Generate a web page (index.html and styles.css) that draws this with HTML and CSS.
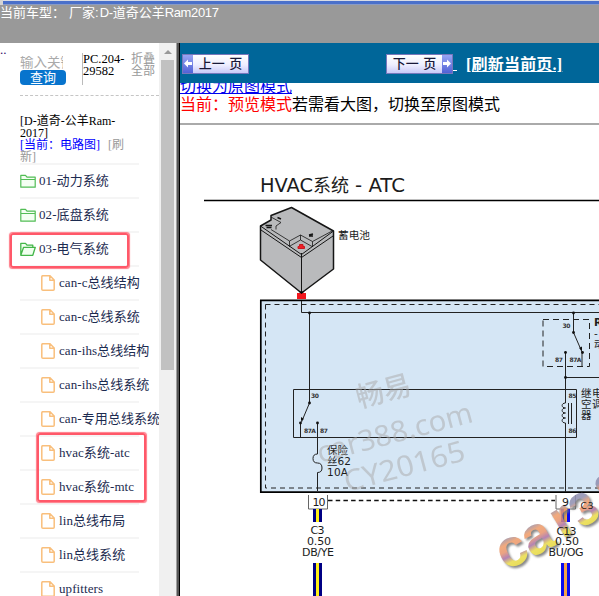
FILE: index.html
```
<!DOCTYPE html>
<html lang="zh-CN">
<head>
<meta charset="utf-8">
<title>HVAC系统 - ATC</title>
<link rel="stylesheet" href="styles.css">
</head>
<body>
<svg class="defs" width="0" height="0">
  <symbol id="folder" viewBox="0 0 16 15"><path d="M.8 13.2V1.3H5.5L7 3.2H15.2V13.2H.8ZM.8 5.5H15.2" fill="#f4fff3" stroke="#52bd55" stroke-width="1.2" stroke-linejoin="round"/></symbol>
  <symbol id="folder-open" viewBox="0 0 16 15"><path d="M.8 13V1.3H5.5L7 3.2H12.8V5.2M.8 13.3L3.6 5.3H15.3L12.8 13.3Z" fill="#f0ffef" stroke="#43b649" stroke-width="1.3" stroke-linejoin="round"/></symbol>
  <symbol id="file" viewBox="0 0 14 16"><path d="M2 .7H9L13.2 5V14.2Q13.2 15.2 12.2 15.2H2Q.8 15.2 .8 14.2V1.8Q.8 .7 2 .7ZM8.8 .9V5.2H13" fill="#fff" stroke="#f9bf7c" stroke-width="1.5" stroke-linejoin="round"/></symbol>
</svg>
<header class="top"><div class="top-line"></div><span>当前车型：</span><span class="maker">厂家:<b>D-</b>道奇公羊<b>Ram2017</b></span></header>
<div class="frames">
  <aside class="side">
    <span class="dots">..</span>
    <div class="nav">
      <div class="tools">
        <div class="search"><div class="input">输入关键</div><div class="button">查询</div></div>
        <div class="code">PC.204-<br>29582</div>
        <div class="fold">折叠<br>全部</div>
      </div>
      <div class="model">[D-道奇-公羊Ram-<br>2017]<br><span class="current">[当前：电路图]</span> <span class="reload">[刷<br>新]</span></div>
      <ul class="tree">
        <li><svg class="dir"><use href="#folder"/></svg>01-动力系统</li>
        <li><svg class="dir"><use href="#folder"/></svg>02-底盘系统</li>
        <li><svg class="dir"><use href="#folder-open"/></svg>03-电气系统</li>
        <li class="leaf"><svg><use href="#file"/></svg>can-c总线结构</li>
        <li class="leaf"><svg><use href="#file"/></svg>can-c总线系统</li>
        <li class="leaf"><svg><use href="#file"/></svg>can-ihs总线结构</li>
        <li class="leaf"><svg><use href="#file"/></svg>can-ihs总线系统</li>
        <li class="leaf"><svg><use href="#file"/></svg>can-专用总线系统</li>
        <li class="leaf"><svg><use href="#file"/></svg>hvac系统-atc</li>
        <li class="leaf"><svg><use href="#file"/></svg>hvac系统-mtc</li>
        <li class="leaf"><svg><use href="#file"/></svg>lin总线布局</li>
        <li class="leaf"><svg><use href="#file"/></svg>lin总线系统</li>
        <li class="leaf"><svg><use href="#file"/></svg>upfitters</li>
      </ul>
    </div>
    <div class="scrollbar"><div class="arrow"></div><div class="thumb"></div></div>
    <div class="mark mark-dir"></div>
    <div class="mark mark-leaf"></div>
  </aside>
  <div class="divider"></div>
  <main class="main">
    <div class="pager">
      <div class="page prev"><i><svg viewBox="0 0 10 16"><path d="M1 8L5 4V6.5H9V9.5H5V12Z" fill="#fff"/></svg></i><span>上一 页</span></div>
      <div class="page next"><span>下一 页</span><i><svg viewBox="0 0 10 16"><path d="M9 8L5 4V6.5H1V9.5H5V12Z" fill="#fff"/></svg></i></div>
      <span class="gap-line"></span>
      <a class="refresh">[刷新当前页.]</a>
    </div>
    <div class="mode"><a>切换为原图模式</a></div>
    <div class="hint"><span>当前：预览模式</span>若需看大图，切换至原图模式</div>
    <svg class="diagram" viewBox="180 125 419 471" width="419" height="471">
      <defs>
        <linearGradient id="logo" x1="0" y1="0" x2="0" y2="1">
          <stop offset=".3" stop-color="#8f8fb0"/><stop offset=".42" stop-color="#f09c68"/><stop offset=".52" stop-color="#e8956f"/><stop offset=".62" stop-color="#a870a8"/><stop offset=".72" stop-color="#eadc4a"/><stop offset=".85" stop-color="#e4d63c"/>
        </linearGradient>
      </defs>
      <text x="260" y="192" font-size="19" textLength="53" lengthAdjust="spacingAndGlyphs">HVAC</text>
      <text x="313" y="192" font-size="18" textLength="36">系统</text>
      <text x="355" y="192" font-size="19" textLength="50" lengthAdjust="spacingAndGlyphs">- ATC</text>
      <path d="M204 200.5H599" stroke="#000" stroke-width="1.4"/>

      <g stroke="#151515" stroke-linejoin="round">
        <path d="M260.5 226L271 220V215.5L291.500 207.500L333.500 231V269L301.500 293L260.500 260Z" fill="#b9babc" stroke-width="1.5"/>
        <path d="M260.500 226L301.500 254.500L333.500 231M261 230L301.500 257.500L333 236M301.500 253V293" fill="none" stroke-width="1"/>
        <path d="M271 217L281 222.500L276 226V229.500M271 229.500L289.500 241L300.500 235L312.500 241.500V247M289.500 241V247M312.500 241.500L333 230.500M300.500 235V240L290 246M300.500 240L312 246.500" fill="none" stroke-width=".8"/>
        <path d="M265.500 225.500H272M266.500 227.500H271.500M277.500 217.500L281 219M309 236H313M309 235L313 234" stroke-width="1.600"/>
        <path d="M298 248.500V246.500H299.500V244.500H303V246.500H304.500V248.500H298Z" fill="#f11f27" stroke="#c71920" stroke-width="1"/>
      </g>
      <text x="338" y="239" font-size="10.700" textLength="32">蓄电池</text>
      <path d="M297 293H306V299H297Z" fill="#f1161c"/>
      <path d="M298.500 291.500L301.500 294L304.500 291.500Z" fill="#000"/>

      <path d="M260.800 300.300H610V492.200H260.800Z" fill="#d5e6f5" stroke="#000" stroke-width="1.700"/>
      <path d="M265.500 304.500H599" stroke="#222" fill="none" stroke-dasharray="5 4"/>
      <path d="M265.500 304.500V488H599" stroke="#222" fill="none" stroke-dasharray="5 4"/>
      <g fill="none" stroke="#222" stroke-width="1">
        <path d="M301.500 301V312.500H599M309.500 312.500V403L301.500 422M300.500 423V437M293.500 389.500H576.500V437.500H293.500ZM317.500 423V454Q313 454 313 458.500Q313 463 317.500 463Q322 463 322 468Q322 472.500 317.500 472.500V491"/>
        <path d="M573.500 313V332.500L582 352V366.500M565.500 352V403C561 403 561 408 565.500 408C561 408 561 413 565.500 413C561 413 561 418 565.500 418C561 418 561 423 565.500 423V492M565.500 377.500H599M568.500 403V424M571.500 403V424"/>
        <path d="M543 319.500H589.500V366.500H543Z" stroke-dasharray="6 4"/>
      </g>
      <g fill="#111"><circle cx="309.500" cy="313" r="1.400"/><circle cx="309.500" cy="403" r="1.400"/><circle cx="300.500" cy="423" r="1.400"/><circle cx="317.500" cy="423" r="1.400"/><circle cx="573.500" cy="313" r="1.400"/><circle cx="573.500" cy="332.500" r="1.400"/><circle cx="582.500" cy="352.500" r="1.400"/><circle cx="565.500" cy="352.500" r="1.400"/><circle cx="565.500" cy="377.500" r="1.400"/><path d="M301 421V417L304 419ZM582 351L579 348L582 346.500Z"/></g>
      <g class="terminals" font-size="6">
        <text x="311" y="398" textLength="8">30</text><text x="304" y="432.500" textLength="12">87A</text><text x="320" y="432.500" textLength="8">87</text>
        <text x="562.500" y="328" textLength="8">30</text><text x="555" y="362" textLength="8">87</text><text x="569.500" y="362" textLength="12">87A</text><text x="568.500" y="398" textLength="8">85</text><text x="568.500" y="433" textLength="8">86</text>
      </g>
      <g font-size="10.500">
        <text x="327" y="454">保险</text><text x="327" y="465" textLength="24">丝62</text><text x="327" y="476" textLength="21">10A</text>
        <text x="594" y="326" font-weight="bold">R</text><text x="594" y="337">-</text><text x="594" y="348">动</text>
        <text x="581" y="397">继</text><text x="581" y="408">空</text><text x="581" y="418.500">器</text><text x="592" y="397">电</text><text x="592" y="408">调</text>
      </g>

      <path d="M308.500 495V509H327.500V495M556 495V509H575.500V495" fill="none" stroke="#666" stroke-width="1"/>
      <path d="M328 500.500H555" stroke="#111" stroke-width="1.600" stroke-dasharray="4.500 3.200"/>
      <path d="M313 509H322V522H313ZM313 563H322V596H313Z" fill="#000084"/><path d="M317.500 509V522M317.500 563V596" stroke="#ffef18" stroke-width="3"/>
      <path d="M561 509H570V522H561ZM561 563H570V596H561Z" fill="#0909ef"/><path d="M565.500 509V522M565.500 563V596" stroke="#f3a247" stroke-width="3"/>
      <g class="watermark">
        <text transform="translate(359 408) rotate(-15)" font-size="28" font-weight="500" textLength="56">畅易</text>
        <text transform="translate(320 463) rotate(-15)" font-size="29" textLength="160" lengthAdjust="spacingAndGlyphs">car388.com</text>
        <text transform="translate(347 492) rotate(-15)" font-size="29" textLength="124" lengthAdjust="spacingAndGlyphs">CY20165</text>
      </g>
      <g class="brand" font-size="53" fill="url(#logo)">
        <text transform="translate(506 571) rotate(-27)">c</text>
        <text transform="translate(532 558) rotate(-29)">a</text>
        <text transform="translate(562 539) rotate(-31)">r</text>
        <text transform="translate(581 529) rotate(-31)" font-size="46">3</text>
        <text transform="translate(607 509) rotate(-31)" font-size="46">8</text>
      </g>
      <g text-anchor="middle" font-size="11">
        <text x="319" y="506" textLength="13">10</text><text x="565.500" y="506">9</text>
        <text x="317.500" y="534" textLength="14">C3</text><text x="319" y="545" textLength="24">0.50</text><text x="318" y="556" textLength="32">DB/YE</text>
        <text x="566.500" y="534.500" textLength="20">C13</text><text x="567" y="545" textLength="24">0.50</text><text x="566" y="556" textLength="35">BU/OG</text>
        <text x="587" y="509" font-size="9" textLength="13">C3</text>
      </g>
    </svg>
  </main>
</div>
</body>
</html>
```

FILE: styles.css
```
* { box-sizing: border-box; }
body { margin: 0; width: 599px; height: 596px; overflow: hidden; background: #fff; font-family: "Liberation Serif", "Noto Sans CJK SC", serif; }
.defs { position: absolute; }
.top { height: 43px; background: #999; color: #fff; font: 13px/16px "Liberation Sans", "Noto Sans CJK SC", sans-serif; white-space: nowrap; }
.top-line { height: 5px; background: linear-gradient(#d8dce5 0 1px, #4a70ca 1px 4px, #899bc5 4px); border-left: 3px solid #d4d4d4; }
.top b { font-weight: normal; font-size: 13px; letter-spacing: -.35px; }
.maker { margin-left: 4px; }
.top b:first-child { margin-left: 1px; }
.frames { display: flex; height: 553px; }
.side { position: relative; display: flex; width: 176px; overflow: hidden; }
.dots { width: 20px; font-size: 13px; line-height: 12px; color: #316; padding-top: 1px; }
.nav { width: 139px; overflow: hidden; }
.tools { height: 53px; display: flex; padding-top: 10px; border-bottom: 1px dashed #c5c5c5; }
.search { width: 62px; padding-top: 3px; }
.input { width: 43px; height: 14px; overflow: hidden; white-space: nowrap; color: #aaa; font-size: 13.5px; line-height: 14px; }
.button { width: 46px; height: 15px; border-radius: 4px; background: #0874cd; color: #fff; font-size: 13px; line-height: 15px; text-align: center; }
.code { width: 49px; height: 32px; border-left: 1px solid #bbb; font-size: 12.5px; line-height: 12px; }
.fold { font-size: 12px; line-height: 12px; color: #999; }
.model { height: 67px; padding-top: 19px; font-size: 12px; line-height: 12px; white-space: nowrap; }
.current { color: #00f; }
.reload { color: #999; margin-left: 5px; }
.tree { list-style: none; margin: 0; padding: 0; }
.tree li { position: relative; display: flex; align-items: center; width: 119px; height: 34px; border-top: 2px solid #f5f5f5; color: #1c2b50; font-size: 13px; letter-spacing: .08px; line-height: 16px; white-space: nowrap; }
.tree svg { width: 14px; height: 16px; margin-right: 4px; flex: none; }
.tree .dir { width: 16px; height: 15px; margin-right: 3px; }
.tree .leaf { padding-left: 21px; }
.scrollbar { width: 17px; background: #f0f0f0; padding: 7px 0 0 2px; }
.arrow { width: 0; height: 0; margin-left: 3px; border: 4px solid transparent; border-top: 0; border-bottom: 4px solid #999; }
.thumb { width: 13px; height: 310px; margin-top: 6px; background: #c1c1c1; }
.mark { position: absolute; border: 2.5px solid #ff5869; border-radius: 3px; box-shadow: 0 0 1px 0.5px #ff7a87; }
.mark-dir { left: 10px; top: 190px; width: 119px; height: 35px; }
.mark-leaf { left: 37px; top: 390px; width: 109px; height: 69px; }
.divider { width: 4px; background: linear-gradient(90deg, #a0a0a0 0 1px, #555 1px 3px, #000 3px); }
.main { width: 419px; overflow: hidden; }
.pager { display: flex; height: 40px; padding: 10px 0 0 2px; background: #069; }
.page { display: flex; height: 20px; margin-top: 1px; border: 1px solid #77b; background: linear-gradient(#fff, #eeeeff 55%, #c9c9f8); color: #181838; font: 500 13px/17px "Liberation Sans", "Noto Sans CJK SC", sans-serif; white-space: nowrap; }
.page i { width: 10px; background: linear-gradient(#98a5f3, #5262d6); }
.page i svg { display: block; width: 10px; height: 17px; }
.page span { flex: 1; text-align: center; word-spacing: 1px; }
.prev { width: 67px; }
.next { width: 67px; margin-left: 137px; }
.gap-line { width: 4px; height: 18px; border-bottom: 1px solid #fff; }
.refresh { margin-left: 9px; height: 24px; color: #fff; font-weight: bold; font-size: 16px; letter-spacing: .2px; line-height: 23px; text-decoration: underline; white-space: nowrap; }
.mode { height: 13px; overflow: hidden; }
.mode a { display: block; margin-top: -5px; color: #00e; font-size: 16px; line-height: 17px; text-decoration: underline; }
.hint { height: 29px; border-bottom: 2px solid #aaa; font-size: 16px; line-height: 18px; white-space: nowrap; }
.hint span { color: #f00; }
.diagram { display: block; font-family: "DejaVu Sans", "Noto Sans CJK SC", sans-serif; fill: #1c1c1c; }
.terminals { font-weight: bold; fill: #333; }
.watermark { fill: #aaa; opacity: .5; font-family: "Noto Sans", "Noto Sans CJK SC", sans-serif; }
.brand { font-family: "Liberation Sans", sans-serif; font-weight: bold; opacity: .86; filter: drop-shadow(2px 2px 1px #777); }
```
